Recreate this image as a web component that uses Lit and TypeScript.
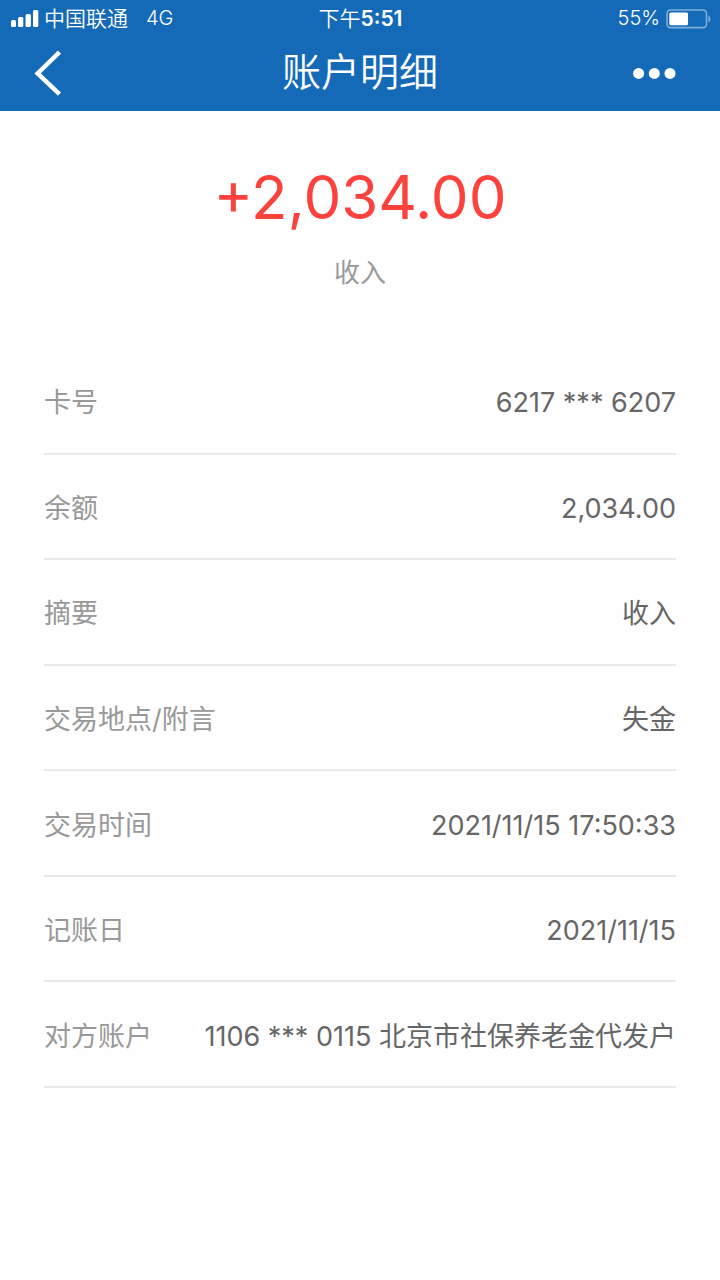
import { LitElement, html, css } from "lit";
import { customElement, property } from "lit/decorators.js";

interface Detail {
  label: string;
  value: string;
}

const DETAILS: Detail[] = [
  { label: "卡号", value: "6217 *** 6207" },
  { label: "余额", value: "2,034.00" },
  { label: "摘要", value: "收入" },
  { label: "交易地点/附言", value: "失金" },
  { label: "交易时间", value: "2021/11/15 17:50:33" },
  { label: "记账日", value: "2021/11/15" },
  { label: "对方账户", value: "1106 *** 0115 北京市社保养老金代发户" },
];

@customElement("status-bar")
export class StatusBar extends LitElement {
  static styles = css`
    :host {
      display: grid;
      grid-template-columns: 1fr auto 1fr;
      align-items: center;
      height: 36px;
      padding: 0 9px 0 10px;
      font-size: 20px;
      font-weight: 350;
      line-height: 37px;
      color: #fff;
    }
    .carrier,
    .power {
      display: flex;
      align-items: center;
    }
    .carrier {
      gap: 5px;
    }
    .name,
    .time {
      font-size: 21px;
    }
    .network {
      margin-left: 13px;
    }
    .digits {
      font-weight: 600;
    }
    .power {
      justify-content: flex-end;
      gap: 6px;
    }
    svg {
      display: block;
    }
  `;

  render() {
    return html`
      <div class="carrier">
        <svg width="29" height="18" viewBox="0 0 29 18" fill="#fff" aria-hidden="true">
          <rect x="1" y="10" width="5" height="7" rx="1.5" />
          <rect x="8" y="7" width="5.3" height="10" rx="1.5" />
          <rect x="15.6" y="4" width="5.3" height="13" rx="1.5" />
          <rect x="23" y="0" width="5.3" height="17" rx="1.5" />
        </svg>
        <span class="name">中国联通</span>
        <span class="network">4G</span>
      </div>
      <div class="time">下午<span class="digits">5:51</span></div>
      <div class="power">
        <span>55%</span>
        <svg width="45" height="20" viewBox="0 0 45 20" aria-hidden="true">
          <rect x="1" y="1" width="39.5" height="17.6" rx="3.5" fill="none" stroke="#7eafdb" stroke-width="1.6" />
          <rect x="3.3" y="3.4" width="18.7" height="12.8" rx="1.5" fill="#fff" />
          <path d="M42.4 6.6c2.6 1 2.6 5.8 0 6.8z" fill="#7eafdb" />
        </svg>
      </div>
    `;
  }
}

@customElement("title-bar")
export class TitleBar extends LitElement {
  static styles = css`
    :host {
      display: grid;
      grid-template-columns: 1fr auto 1fr;
      align-items: center;
      height: 75px;
      padding: 0 34px;
      color: #fff;
    }
    h1 {
      margin: 0;
      padding-bottom: 4px;
      font-size: 39px;
      font-weight: 350;
      line-height: 60px;
    }
    button {
      display: block;
      justify-self: start;
      padding: 0;
      border: 0;
      background: none;
      color: inherit;
      cursor: pointer;
    }
    .more {
      justify-self: end;
      padding-right: 10px;
    }
    svg {
      display: block;
    }
  `;

  render() {
    return html`
      <button type="button" aria-label="返回">
        <svg width="30" height="48" viewBox="0 0 30 48" fill="none" stroke="currentColor" stroke-width="4.4">
          <path d="M25.5 2.2 3.6 23.4l21.9 20.8" />
        </svg>
      </button>
      <h1>账户明细</h1>
      <button class="more" type="button" aria-label="更多">
        <svg width="43" height="48" viewBox="0 0 43 48" fill="currentColor">
          <circle cx="5.6" cy="23.4" r="5.5" />
          <circle cx="21.3" cy="23.4" r="5.5" />
          <circle cx="37" cy="23.4" r="5.5" />
        </svg>
      </button>
    `;
  }
}

@customElement("detail-list")
export class DetailList extends LitElement {
  @property({ attribute: false }) items: Detail[] = [];

  static styles = css`
    :host {
      display: block;
    }
    .list {
      display: grid;
      grid-auto-rows: 1fr;
      min-height: 739px;
      margin: 0 44px;
    }
    .row {
      display: flex;
      align-items: center;
      justify-content: space-between;
      gap: 24px;
      padding-top: 5px;
      border-bottom: 2px solid #e8e8e8;
      font-size: 27px;
      line-height: 40px;
    }
    dt {
      flex: none;
      color: #999;
    }
    dd {
      margin: 0;
      color: #666;
      text-align: right;
    }
  `;

  render() {
    return html`
      <dl class="list">
        ${this.items.map(
          (item) => html`<div class="row"><dt>${item.label}</dt><dd>${item.value}</dd></div>`
        )}
      </dl>
    `;
  }
}

@customElement("app-root")
export class AppRoot extends LitElement {
  static styles = css`
    :host {
      display: block;
      min-height: 100vh;
      background: #fefefe;
      font-family: Inter, "Noto Sans CJK SC", sans-serif;
      font-weight: 400;
    }
    header {
      background: #156ab7;
    }
    .summary {
      padding: 46px 44px 56px;
      text-align: center;
    }
    .amount {
      margin: 0;
      font-size: 60px;
      line-height: 80px;
      color: #fc423c;
    }
    .kind {
      margin: 16px 0 0;
      font-size: 26px;
      line-height: 40px;
      color: #999;
    }
  `;

  render() {
    return html`
      <header>
        <status-bar></status-bar>
        <title-bar></title-bar>
      </header>
      <main>
        <section class="summary">
          <p class="amount">+2,034.00</p>
          <p class="kind">收入</p>
        </section>
        <detail-list .items=${DETAILS}></detail-list>
      </main>
    `;
  }
}
